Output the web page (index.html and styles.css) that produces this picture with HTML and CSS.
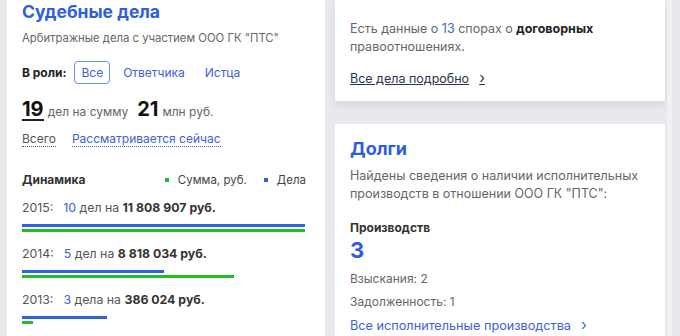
FILE: index.html
```html
<!DOCTYPE html>
<html lang="ru">
<head>
    <meta charset="UTF-8">
    <title>Судебные дела и долги</title>
    <link rel="stylesheet" href="styles.css">
</head>
<body>
    <div class="page">
        <!-- Судебные дела -->
        <section class="card card-cases">
            <h2 class="card-title">Судебные дела</h2>
            <p class="muted">Арбитражные дела с участием ООО ГК "ПТС"</p>

            <div class="roles">
                <span class="roles-label">В роли:</span>
                <span class="role active">Все</span>
                <span class="role">Ответчика</span>
                <span class="role">Истца</span>
            </div>

            <div class="totals">
                <span class="big underline">19</span>
                <span class="unit">дел на сумму</span>
                <span class="big">21</span>
                <span class="unit">млн руб.</span>
            </div>

            <div class="tabs">
                <span class="tab">Всего</span>
                <span class="tab tab-link">Рассматривается сейчас</span>
            </div>

            <div class="dyn-head">
                <span class="dyn-title">Динамика</span>
                <span class="legend"><i class="dot green"></i>Сумма, руб.</span>
                <span class="legend"><i class="dot blue"></i>Дела</span>
            </div>

            <div class="year">
                <div class="year-text"><span class="y">2015:</span><b class="cnt">10</b> дел на <strong>11 808 907 руб.</strong></div>
                <div class="bar blue" style="width: 283px"></div>
                <div class="bar green" style="width: 283px"></div>
            </div>
            <div class="year">
                <div class="year-text"><span class="y">2014:</span><b class="cnt">5</b> дел на <strong>8 818 034 руб.</strong></div>
                <div class="bar blue" style="width: 142px"></div>
                <div class="bar green" style="width: 212px"></div>
            </div>
            <div class="year">
                <div class="year-text"><span class="y">2013:</span><b class="cnt">3</b> дела на <strong>386 024 руб.</strong></div>
                <div class="bar blue" style="width: 85px"></div>
                <div class="bar green" style="width: 11px"></div>
            </div>
        </section>

        <div class="column">
            <!-- Договорные споры -->
            <section class="card card-disputes">
                <p class="muted text">Есть данные о <span class="num">13</span> спорах о <strong>договорных</strong> правоотношениях.</p>
                <a class="more dark">Все дела подробно</a>
            </section>

            <!-- Долги -->
            <section class="card card-debts">
                <h2 class="card-title">Долги</h2>
                <p class="muted text">Найдены сведения о наличии исполнительных производств в отношении ООО ГК "ПТС":</p>
                <div class="label">Производств</div>
                <div class="count">3</div>
                <div class="muted line">Взыскания: 2</div>
                <div class="muted line">Задолженность: 1</div>
                <a class="more">Все исполнительные производства</a>
            </section>
        </div>

        <div class="edge"></div>
    </div>
</body>
</html>
```

FILE: styles.css
```css
/* Basic Styles */
body {
    margin: 0;
    font-family: Inter, "Noto Sans", sans-serif;
    font-size: 12px;
    color: #222;
    background-color: #e7e9ed;
    overflow: hidden;
}

.page {
    display: flex;
    align-items: flex-start;
    gap: 10px;
    padding-left: 7px;
}

/* Cards */
.card {
    background-color: #fff;
    box-sizing: border-box;
    padding: 0 15px;
}

.card-title {
    margin: 0;
    font-size: 18px;
    font-weight: 700;
    color: #2d5ee0;
}

.muted {
    color: #666;
    margin: 0;
}

/* Left card */
.card-cases {
    width: 318px;
    height: 336px;
    padding-top: 1px;
}

.card-cases .card-title {
    font-size: 17.5px;
}

.card-cases .muted {
    margin-top: 9px;
    font-size: 11.3px;
}

.roles {
    display: flex;
    align-items: center;
    margin-top: 16px;
}

.roles-label {
    font-weight: 700;
    color: #222;
    margin-right: 8px;
}

.role {
    color: #3d62d6;
    padding: 3px 6px;
    margin-right: 6px;
    border: 1px solid transparent;
    border-radius: 4px;
}

.role.active {
    border-color: #6f8fe6;
}

.totals {
    display: flex;
    align-items: baseline;
    margin-top: 13px;
}

.big {
    font-size: 20px;
    font-weight: 700;
    color: #111;
}

.big.underline {
    border-bottom: 2px solid #222;
    line-height: 19px;
}

.unit {
    color: #666;
    margin: 0 9px 0 4px;
}

.tabs {
    display: flex;
    gap: 16px;
    margin-top: 10px;
}

.tab {
    color: #555;
    border-bottom: 1px dotted #555;
    line-height: 15px;
}

.tab-link {
    color: #3d62d6;
    border-bottom-color: #3d62d6;
}

.dyn-head {
    display: flex;
    align-items: center;
    margin-top: 25px;
    margin-right: 4px;
}

.dyn-title {
    font-weight: 700;
    color: #333;
    flex: 1;
}

.legend {
    color: #444;
    margin-left: 17px;
    font-size: 11.5px;
}

.dot {
    display: inline-block;
    width: 4px;
    height: 4px;
    margin-right: 9px;
    vertical-align: middle;
}

.dot.green,
.bar.green {
    background-color: #1fbf1f;
}

.dot.blue,
.bar.blue {
    background-color: #2f62e3;
}

.year {
    margin-top: 13px;
}

.year + .year {
    margin-top: 14px;
}

.year-text {
    color: #555;
    font-size: 12.3px;
    margin-bottom: 9px;
}

.year-text .y {
    margin-right: 10px;
}

.year-text .cnt {
    font-weight: 400;
    color: #3d62d6;
}

.year-text strong {
    color: #333;
}

.bar {
    height: 3px;
    margin-bottom: 2px;
}

/* Right column */
.column {
    width: 330px;
    display: flex;
    flex-direction: column;
    gap: 23px;
}

.card-disputes {
    height: 101px;
    padding-top: 20px;
    box-shadow: 0 4px 8px rgba(0, 0, 0, 0.08);
}

.text {
    line-height: 18px;
    font-size: 12.5px;
}

.num {
    color: #3d62d6;
}

.text strong {
    color: #222;
}

.more {
    display: inline-block;
    color: #3d62d6;
    margin-top: 12px;
    font-size: 12.5px;
}

.more::after {
    content: "›";
    margin-left: 10px;
    font-size: 15px;
}

.more.dark {
    color: #2a3550;
    text-decoration: underline;
}

.card-debts {
    height: 220px;
    padding-top: 14px;
}

.card-debts .text {
    margin-top: 8px;
}

.label {
    font-weight: 700;
    color: #333;
    margin-top: 17px;
}

.count {
    font-size: 22px;
    font-weight: 700;
    color: #2d5ee0;
    margin-top: 2px;
}

.line {
    margin-top: 8px;
}

.card-debts .more {
    font-size: 12.7px;
    margin-top: 6px;
}

/* Right edge strip */
.edge {
    width: 5px;
    height: 336px;
    margin-left: -8px;
    background-color: #eff1f4;
}
```
